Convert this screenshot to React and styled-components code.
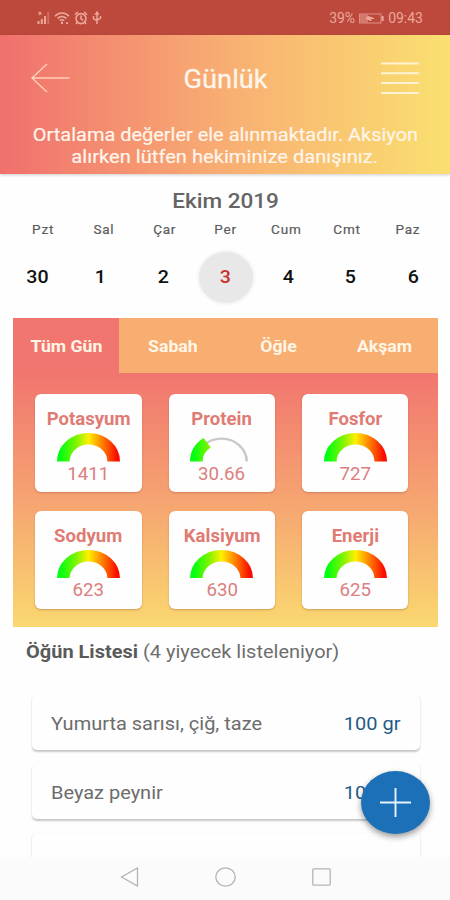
import styled, { createGlobalStyle, css } from "styled-components";

const weekDays = ["Pzt", "Sal", "Çar", "Per", "Cum", "Cmt", "Paz"];
const dates = [30, 1, 2, 3, 4, 5, 6];
const selectedDate = 3;
const meals = ["Tüm Gün", "Sabah", "Öğle", "Akşam"];

const nutrients = [
  { name: "Potasyum", value: "1411", percent: 100 },
  { name: "Protein", value: "30.66", percent: 30.5 },
  { name: "Fosfor", value: "727", percent: 100 },
  { name: "Sodyum", value: "623", percent: 100 },
  { name: "Kalsiyum", value: "630", percent: 100 },
  { name: "Enerji", value: "625", percent: 100 },
];

const foods = [
  { name: "Yumurta sarısı, çiğ, taze", amount: "100 gr" },
  { name: "Beyaz peynir", amount: "100 gr" },
  { name: "", amount: "" },
];

const GlobalStyle = createGlobalStyle`
  * {
    box-sizing: border-box;
  }
  body {
    margin: 0;
    font-family: Roboto, "Liberation Sans", sans-serif;
    background-color: #fefefe;
  }
`;

// the device font is a little wider than plain Roboto
const wide = css`
  display: inline-block;
  white-space: nowrap;
  transform: scaleX(${(props) => props.$wide || 1.08});
  transform-origin: ${(props) => props.$from || "center"};
`;

const Wide = styled.span`
  ${wide}
`;

const Screen = styled.div`
  position: relative;
  display: flex;
  flex-direction: column;
  width: 450px;
  height: 900px;
  overflow: hidden;
  background-color: #fefefe;
`;

const StatusBar = styled.div`
  flex: none;
  display: flex;
  justify-content: space-between;
  align-items: center;
  height: 35px;
  padding: 1px 27px 0 36px;
  color: #eba899;
  background-color: #bd493d;
  font-size: 14px;
`;

const StatusGroup = styled.div`
  display: flex;
  align-items: center;
  gap: ${(props) => props.$gap}px;
`;

const Header = styled.header`
  flex: none;
  height: 139px;
  padding-top: 20px;
  color: #fff5ea;
  background: linear-gradient(90deg, #f0706d 0%, #f8ae73 50%, #fae070 100%);
  box-shadow: 0 1px 3px rgba(0, 0, 0, 0.2);
`;

const HeaderRow = styled.div`
  display: flex;
  justify-content: space-between;
  align-items: center;
  height: 46px;
  padding: 0 31px 0 30px;
`;

const Title = styled.h1`
  margin: 0;
  padding-top: 3px;
  font-size: 25px;
  font-weight: 400;
  -webkit-text-stroke: 0.3px;
`;

const Notice = styled.p`
  display: flex;
  flex-direction: column;
  align-items: center;
  margin: 23px 0 0;
  font-size: 19px;
  line-height: 22px;
  -webkit-text-stroke: 0.2px;
`;

const Month = styled.h2`
  flex: none;
  margin: 14px 0 0;
  padding-left: 2px;
  font-size: 20.5px;
  font-weight: 500;
  line-height: 26px;
  text-align: center;
  color: #656565;
`;

const WeekRow = styled.div`
  flex: none;
  display: grid;
  grid-template-columns: repeat(7, 60.8px);
  justify-content: center;
  height: 30px;
  padding-left: 1px;
  line-height: 30px;
  font-size: 13.5px;
  text-align: center;
  letter-spacing: 0.8px;
  color: #5c5c5c;
  -webkit-text-stroke: 0.2px;
`;

const DateRow = styled.div`
  flex: none;
  display: grid;
  grid-template-columns: repeat(7, 62.5px);
  justify-content: center;
  justify-items: center;
  align-items: center;
  height: 66px;
  padding-left: 1px;
`;

const DateCell = styled.div`
  display: flex;
  justify-content: center;
  align-items: center;
  width: 54px;
  height: 51px;
  padding-bottom: 1px;
  border-radius: 50%;
  font-size: 18.5px;
  font-weight: 500;
  color: ${(props) => (props.$selected ? "#c9302c" : "#111")};
  background-color: ${(props) => (props.$selected ? "#e8e8e8" : "transparent")};
  box-shadow: ${(props) => (props.$selected ? "0 0 4px #e4e4e4" : "none")};
`;

const Panel = styled.section`
  flex: none;
  height: 309px;
  margin: 8px 12px 0 13px;
  background: linear-gradient(180deg, #f1766f 18%, #f6a571 60%, #fad870 100%);
`;

const Tabs = styled.div`
  display: grid;
  grid-template-columns: repeat(4, 1fr);
  height: 55px;
`;

const Tab = styled.div`
  display: flex;
  justify-content: center;
  align-items: center;
  font-size: 17px;
  font-weight: 700;
  color: #fff6e6;
  background-color: ${(props) => (props.$active ? "#f1766f" : "#f8ae71")};
`;

const Cards = styled.div`
  display: grid;
  grid-template-columns: repeat(3, 106.5px);
  grid-auto-rows: 98px;
  gap: 18.5px 26.8px;
  padding: 21px 0 0 22.3px;
`;

const Card = styled.div`
  display: flex;
  flex-direction: column;
  align-items: center;
  padding-top: 15px;
  border-radius: 6px;
  color: #e07b74;
  background-color: #fefefe;
  box-shadow: 0 1px 2px rgba(150, 80, 50, 0.4);
`;

const CardName = styled.div`
  height: 24px;
  line-height: 20px;
  font-size: 17.5px;
  font-weight: 700;
`;

const CardValue = styled.div`
  line-height: 24px;
  font-size: 18px;
  color: #db7e80;
`;

const GaugeSvg = styled.svg`
  display: block;
  width: 63px;
  height: 28.5px;
`;

const ListTitle = styled.div`
  flex: none;
  margin-top: 12px;
  padding-left: 26px;
  line-height: 26px;
  font-size: 18.5px;
  color: #6e6e6e;

  b {
    font-weight: 700;
    color: #5a5a5a;
  }
`;

const FoodList = styled.div`
  flex: 1;
  display: flex;
  flex-direction: column;
  gap: 14px;
  min-height: 0;
  margin-top: 30px;
  padding: 0 30px 0 32px;
  overflow: hidden;
`;

const Food = styled.div`
  flex: none;
  display: flex;
  justify-content: space-between;
  align-items: center;
  height: 55px;
  padding: 2px 20px 0 19px;
  border-radius: 5px;
  font-size: 18.5px;
  color: #6c6c6c;
  background-color: #fefefe;
  box-shadow: 0 1.5px 2px rgba(0, 0, 0, 0.22);
`;

const Amount = styled.span`
  ${wide}
  color: #245a85;
`;

const NavBar = styled.nav`
  flex: none;
  display: flex;
  justify-content: center;
  align-items: center;
  gap: 76px;
  height: 43px;
  padding-bottom: 4px;
  background-color: #fbfbfb;
`;

const AddButton = styled.button`
  position: absolute;
  right: 20px;
  bottom: 66px;
  display: flex;
  justify-content: center;
  align-items: center;
  width: 69px;
  height: 63px;
  padding: 0;
  border: none;
  border-radius: 50%;
  background-color: #1c70b7;
  box-shadow: 0 3px 6px rgba(0, 0, 0, 0.4);
`;

const Line = styled.svg`
  display: block;
  fill: none;
  stroke: ${(props) => props.$color || "currentColor"};
  stroke-width: ${(props) => props.$weight || 1};
`;

const SignalIcon = () => (
  <Line width="14" height="14" viewBox="0 0 14 14" $weight={2}>
    <path d="M2.5 13v-3M5.8 13V8M9 13V5" />
    <path d="M12.2 13V1" opacity="0.4" />
    <path d="M2.5 1l3 2.5M5 1L2.8 4" strokeWidth="1.2" />
  </Line>
);

const WifiIcon = () => (
  <Line width="16" height="14" viewBox="0 0 16 14" $weight={1.6}>
    <path d="M1 5.2C5 1 11 1 15 5.2M3.5 7.5c2.7-2.6 6.3-2.6 9 0M5.8 9.7c1.4-1.2 3-1.2 4.4 0" />
    <path d="M8 10.8v2.2M13 11.2v1.8" strokeWidth="2" />
  </Line>
);

const AlarmIcon = () => (
  <Line width="14" height="14" viewBox="0 0 14 14" $weight={1.6}>
    <circle cx="7" cy="7.6" r="5" />
    <path d="M7 4.6v3.2l2.3 1.4M1 3.8L3.8 1M13 3.8L10.2 1M3.2 11.6L2 13M10.8 11.6L12 13" />
  </Line>
);

const UsbIcon = () => (
  <Line width="10" height="14" viewBox="0 0 10 14" $weight={1.5}>
    <path d="M5 2v11M1.5 5v2.8L5 9.5M8.5 5v2.3L5 9" />
    <path d="M3.8 3L5 1.2 6.2 3z" />
  </Line>
);

const BatteryIcon = () => (
  <Line width="25" height="11" viewBox="0 0 25 11" $weight={1}>
    <rect x="0.5" y="1" width="21.5" height="9" opacity="0.75" />
    <rect x="1" y="1.5" width="8" height="8" fill="currentColor" opacity="0.5" stroke="none" />
    <path d="M9 3.5l6 2-4 .4 1 1.8-5-2.3z" fill="currentColor" />
    <path d="M23.6 3v5" strokeWidth="2" />
  </Line>
);

const Gauge = ({ percent }) => (
  <GaugeSvg viewBox="-100 -100 200 100" preserveAspectRatio="none">
    <defs>
      <linearGradient id="scale" gradientUnits="userSpaceOnUse" x1="-100" y1="0" x2="100" y2="0">
        <stop offset="0.05" stopColor="#00ff12" />
        <stop offset="0.3" stopColor="#7df400" />
        <stop offset="0.5" stopColor="#fff000" />
        <stop offset="0.72" stopColor="#ff8000" />
        <stop offset="0.95" stopColor="#fa0c00" />
      </linearGradient>
    </defs>
    {percent < 100 && (
      <path d="M-80 0A80 80 0 0 1 80 0" fill="none" stroke="#c9c9cc" strokeWidth="8" />
    )}
    <path
      d="M-80 0A80 80 0 0 1 80 0"
      fill="none"
      stroke="url(#scale)"
      strokeWidth="40"
      pathLength="100"
      strokeDasharray={`${percent} 200`}
    />
  </GaugeSvg>
);

const App = () => {
  return (
    <Screen>
      <GlobalStyle />
      <StatusBar>
        <StatusGroup $gap={4}>
          <SignalIcon />
          <WifiIcon />
          <AlarmIcon />
          <UsbIcon />
        </StatusGroup>
        <StatusGroup $gap={4}>
          <span>39%</span>
          <BatteryIcon />
          <span>09:43</span>
        </StatusGroup>
      </StatusBar>

      <Header>
        <HeaderRow>
          <Line width="40" height="30" viewBox="0 0 40 30" $weight={1.4} $color="#ffd0bb">
            <path d="M39.5 15H2M17 1L2 15l15 14" />
          </Line>
          <Title>
            <Wide $wide={1.09}>Günlük</Wide>
          </Title>
          <Line width="38" height="34" viewBox="0 0 38 34" $weight={2} $color="#fff3d4">
            <path d="M0 2.5h38M0 12.3h38M0 22.1h38M0 31.9h38" />
          </Line>
        </HeaderRow>
        <Notice>
          <Wide $wide={1.05}>Ortalama değerler ele alınmaktadır. Aksiyon</Wide>
          <Wide $wide={1.06}>alırken lütfen hekiminize danışınız.</Wide>
        </Notice>
      </Header>

      <Month>
        <Wide $wide={1.1}>Ekim 2019</Wide>
      </Month>
      <WeekRow>
        {weekDays.map((day) => (
          <span key={day}>{day}</span>
        ))}
      </WeekRow>
      <DateRow>
        {dates.map((date) => (
          <DateCell key={date} $selected={date === selectedDate}>
            <Wide $wide={1.06}>{date}</Wide>
          </DateCell>
        ))}
      </DateRow>

      <Panel>
        <Tabs>
          {meals.map((meal, index) => (
            <Tab key={meal} $active={index === 0}>
              <Wide $wide={1.04}>{meal}</Wide>
            </Tab>
          ))}
        </Tabs>
        <Cards>
          {nutrients.map((item) => (
            <Card key={item.name}>
              <CardName>
                <Wide $wide={1.06}>{item.name}</Wide>
              </CardName>
              <Gauge percent={item.percent} />
              <CardValue>
                <Wide $wide={1.04}>{item.value}</Wide>
              </CardValue>
            </Card>
          ))}
        </Cards>
      </Panel>

      <ListTitle>
        <Wide $from="left">
          <b>Öğün Listesi</b> (4 yiyecek listeleniyor)
        </Wide>
      </ListTitle>
      <FoodList>
        {foods.map((food, index) => (
          <Food key={index}>
            <Wide $from="left">{food.name}</Wide>
            <Amount $from="right">{food.amount}</Amount>
          </Food>
        ))}
      </FoodList>

      <NavBar>
        <Line width="19" height="20" viewBox="0 0 19 20" $weight={1.3} $color="#b4b4b4">
          <path d="M17.5 1v18L1.5 10z" />
        </Line>
        <Line width="21" height="20" viewBox="0 0 21 20" $weight={1.3} $color="#b4b4b4">
          <ellipse cx="10.5" cy="10" rx="9.7" ry="9.2" />
        </Line>
        <Line width="19" height="18" viewBox="0 0 19 18" $weight={1.3} $color="#b4b4b4">
          <rect x="0.8" y="0.8" width="17.4" height="16.4" rx="1" />
        </Line>
      </NavBar>

      <AddButton>
        <Line width="31" height="29" viewBox="0 0 31 29" $weight={1.9} $color="#e6f3fc">
          <path d="M15.5 0v29M0 14.5h31" />
        </Line>
      </AddButton>
    </Screen>
  );
};

export default App;
